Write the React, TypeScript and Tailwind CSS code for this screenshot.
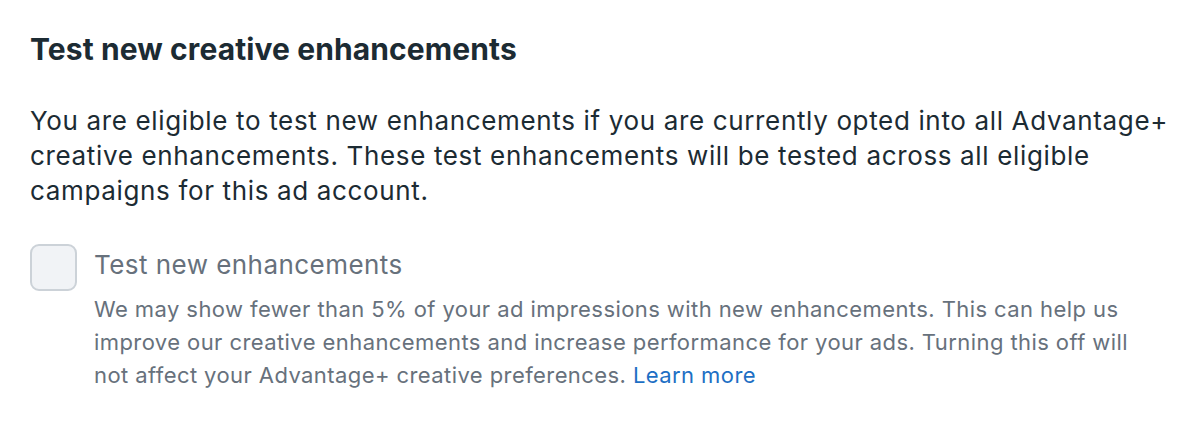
export default function App() {
  return (
    <div
      className="w-[1186px] h-[422px] bg-white pl-[30px] pr-[20px] pt-[29px] text-[#1c2b33]"
      style={{ fontFamily: "Inter, 'Noto Sans', sans-serif" }}
    >
      <h2 className="text-[30px] leading-[40px] font-bold tracking-[0.1px] whitespace-nowrap">
        Test new creative enhancements
      </h2>
      <p className="mt-[34px] text-[26px] leading-[35px] tracking-[0.65px] whitespace-nowrap">
        You are eligible to test new enhancements if you are currently opted into all Advantage+
        <br />
        creative enhancements. These test enhancements will be tested across all eligible
        <br />
        campaigns for this ad account.
      </p>
      <div className="mt-[36px] flex gap-[17px]">
        <div className="w-[47px] h-[47px] shrink-0 rounded-[9px] border-2 border-[#ccd2d8] bg-[#f1f3f6]" />
        <div className="pt-[3px]">
          <div className="text-[26px] leading-[36px] tracking-[0.45px] text-[#67717c]">Test new enhancements</div>
          <p className="mt-[10px] text-[22px] leading-[33px] tracking-[0.42px] text-[#67717c] whitespace-nowrap">
            We may show fewer than 5% of your ad impressions with new enhancements. This can help us
            <br />
            improve our creative enhancements and increase performance for your ads. Turning this off will
            <br />
            not affect your Advantage+ creative preferences. <span className="text-[#1d6fc4]">Learn more</span>
          </p>
        </div>
      </div>
    </div>
  );
}
